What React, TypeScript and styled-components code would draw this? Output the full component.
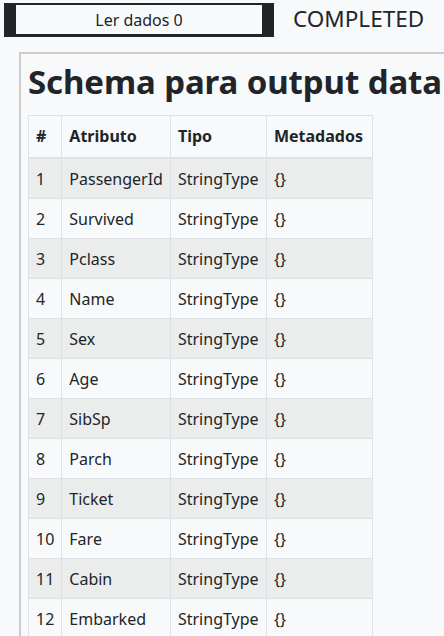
import React from "react";
import styled, { createGlobalStyle } from "styled-components";

const Global = createGlobalStyle`
  html, body { margin: 0; padding: 0; background: #f8f9fa; }
  body { font-family: "Noto Sans", "Open Sans", sans-serif; color: #212529; overflow: hidden; }
`;

const Page = styled.div`
  width: 444px;
  height: 636px;
  overflow: hidden;
  background: #f8f9fa;
`;

const TopBar = styled.div`
  display: flex;
  align-items: center;
  padding: 3px 0 0 4px;
  gap: 19px;
`;

const RunButton = styled.div`
  width: 246px;
  background: #212529;
  padding: 2px 12px 3px;
`;

const RunInner = styled.div`
  background: #f8f9fa;
  height: 29px;
  display: flex;
  align-items: center;
  justify-content: center;
  font-size: 16px;
  color: #212529;
`;

const Status = styled.div`
  font-size: 22.5px;
  color: #212529;
  margin-top: -3px;
`;

const Panel = styled.div`
  margin: 15px 0 0 19px;
  border-left: 2px solid #cccccc;
  border-top: 2px solid #cccccc;
  padding: 8px 0 0 7px;
  width: 460px;
`;

const Title = styled.h2`
  margin: 0 0 13px 0;
  font-size: 33px;
  font-weight: 700;
  line-height: 1.2;
  white-space: nowrap;
  letter-spacing: -0.1px;
`;

const Table = styled.table`
  border-collapse: collapse;
  font-size: 16px;
  line-height: 24px;
`;

const Th = styled.th<{ $w: number }>`
  width: ${(p) => p.$w}px;
  box-sizing: border-box;
  text-align: left;
  font-weight: 700;
  padding: 8px 7px 9px;
  border: 1px solid #dee2e6;
  border-bottom: 2px solid #dee2e6;
  background: #f8f9fa;
  white-space: nowrap;
`;

const Row = styled.tr<{ $striped: boolean }>`
  background: ${(p) => (p.$striped ? "#ebecec" : "#f8f9fa")};
`;

const Td = styled.td`
  padding: 8px 7px 7px;
  border: 1px solid #dee2e6;
  white-space: nowrap;
  font-weight: 400;
`;

const fields = [
  "PassengerId",
  "Survived",
  "Pclass",
  "Name",
  "Sex",
  "Age",
  "SibSp",
  "Parch",
  "Ticket",
  "Fare",
  "Cabin",
  "Embarked",
];

export default function App() {
  return (
    <Page>
      <Global />
      <TopBar>
        <RunButton>
          <RunInner>Ler dados 0</RunInner>
        </RunButton>
        <Status>COMPLETED</Status>
      </TopBar>
      <Panel>
        <Title>Schema para output data</Title>
        <Table>
          <thead>
            <tr>
              <Th $w={33}>#</Th>
              <Th $w={106}>Atributo</Th>
              <Th $w={96}>Tipo</Th>
              <Th $w={106}>Metadados</Th>
            </tr>
          </thead>
          <tbody>
            {fields.map((f, i) => (
              <Row key={f} $striped={i % 2 === 0}>
                <Td>{i + 1}</Td>
                <Td>{f}</Td>
                <Td>StringType</Td>
                <Td>{"{}"}</Td>
              </Row>
            ))}
          </tbody>
        </Table>
      </Panel>
    </Page>
  );
}
